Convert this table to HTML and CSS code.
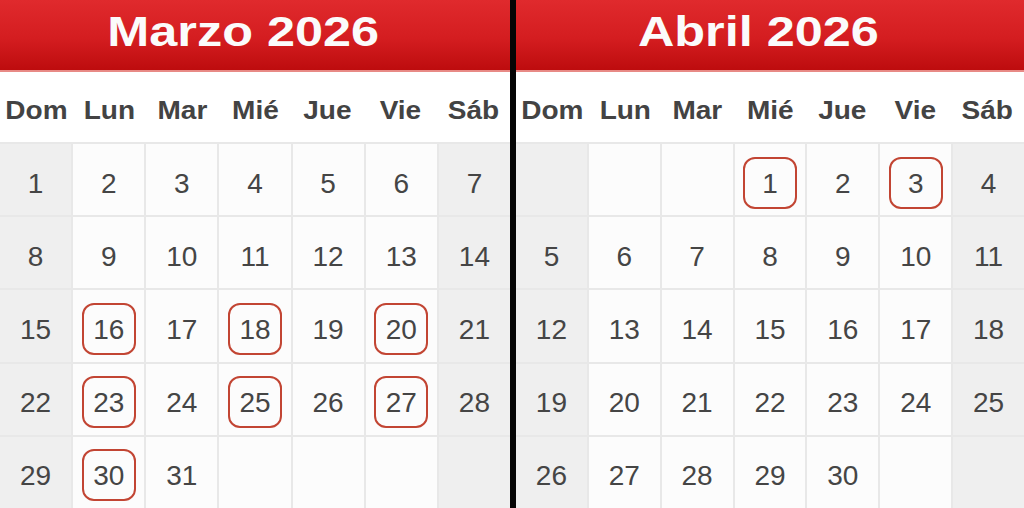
FILE: index.html
```html
<!DOCTYPE html>
<html lang="es">
<head>
<meta charset="utf-8">
<title>Marzo y Abril 2026</title>
<link rel="stylesheet" href="styles.css">
</head>
<body>
<div class="page">
  <section class="cal cal-left">
    <header class="cal-head"><h1 class="title">Marzo 2026</h1></header>
    <div class="weekdays">
      <span>Dom</span><span>Lun</span><span>Mar</span><span>Mié</span><span>Jue</span><span>Vie</span><span>Sáb</span>
    </div>
    <div class="grid">
      <div class="cell we"><span class="n">1</span></div>
      <div class="cell"><span class="n">2</span></div>
      <div class="cell"><span class="n">3</span></div>
      <div class="cell"><span class="n">4</span></div>
      <div class="cell"><span class="n">5</span></div>
      <div class="cell"><span class="n">6</span></div>
      <div class="cell we"><span class="n">7</span></div>

      <div class="cell we"><span class="n">8</span></div>
      <div class="cell"><span class="n">9</span></div>
      <div class="cell"><span class="n">10</span></div>
      <div class="cell"><span class="n">11</span></div>
      <div class="cell"><span class="n">12</span></div>
      <div class="cell"><span class="n">13</span></div>
      <div class="cell we"><span class="n">14</span></div>

      <div class="cell we"><span class="n">15</span></div>
      <div class="cell"><span class="n mark">16</span></div>
      <div class="cell"><span class="n">17</span></div>
      <div class="cell"><span class="n mark">18</span></div>
      <div class="cell"><span class="n">19</span></div>
      <div class="cell"><span class="n mark">20</span></div>
      <div class="cell we"><span class="n">21</span></div>

      <div class="cell we"><span class="n">22</span></div>
      <div class="cell"><span class="n mark">23</span></div>
      <div class="cell"><span class="n">24</span></div>
      <div class="cell"><span class="n mark">25</span></div>
      <div class="cell"><span class="n">26</span></div>
      <div class="cell"><span class="n mark">27</span></div>
      <div class="cell we"><span class="n">28</span></div>

      <div class="cell we"><span class="n">29</span></div>
      <div class="cell"><span class="n mark">30</span></div>
      <div class="cell"><span class="n">31</span></div>
      <div class="cell"></div>
      <div class="cell"></div>
      <div class="cell"></div>
      <div class="cell we"></div>
    </div>
  </section>

  <div class="divider"></div>

  <section class="cal cal-right">
    <header class="cal-head"><h1 class="title">Abril 2026</h1></header>
    <div class="weekdays">
      <span>Dom</span><span>Lun</span><span>Mar</span><span>Mié</span><span>Jue</span><span>Vie</span><span>Sáb</span>
    </div>
    <div class="grid">
      <div class="cell we"></div>
      <div class="cell"></div>
      <div class="cell"></div>
      <div class="cell"><span class="n mark">1</span></div>
      <div class="cell"><span class="n">2</span></div>
      <div class="cell"><span class="n mark">3</span></div>
      <div class="cell we"><span class="n">4</span></div>

      <div class="cell we"><span class="n">5</span></div>
      <div class="cell"><span class="n">6</span></div>
      <div class="cell"><span class="n">7</span></div>
      <div class="cell"><span class="n">8</span></div>
      <div class="cell"><span class="n">9</span></div>
      <div class="cell"><span class="n">10</span></div>
      <div class="cell we"><span class="n">11</span></div>

      <div class="cell we"><span class="n">12</span></div>
      <div class="cell"><span class="n">13</span></div>
      <div class="cell"><span class="n">14</span></div>
      <div class="cell"><span class="n">15</span></div>
      <div class="cell"><span class="n">16</span></div>
      <div class="cell"><span class="n">17</span></div>
      <div class="cell we"><span class="n">18</span></div>

      <div class="cell we"><span class="n">19</span></div>
      <div class="cell"><span class="n">20</span></div>
      <div class="cell"><span class="n">21</span></div>
      <div class="cell"><span class="n">22</span></div>
      <div class="cell"><span class="n">23</span></div>
      <div class="cell"><span class="n">24</span></div>
      <div class="cell we"><span class="n">25</span></div>

      <div class="cell we"><span class="n">26</span></div>
      <div class="cell"><span class="n">27</span></div>
      <div class="cell"><span class="n">28</span></div>
      <div class="cell"><span class="n">29</span></div>
      <div class="cell"><span class="n">30</span></div>
      <div class="cell"></div>
      <div class="cell we"></div>
    </div>
  </section>
</div>
</body>
</html>
```

FILE: styles.css
```css
* { box-sizing: border-box; }

html, body {
  margin: 0;
  padding: 0;
  background: #ffffff;
}

body {
  font-family: "Liberation Sans", Arial, Helvetica, sans-serif;
  color: #454545;
}

.page {
  display: flex;
  width: 1024px;
  height: 508px;
  overflow: hidden;
}

.cal {
  display: flex;
  flex-direction: column;
  height: 508px;
}

.cal-left { width: 510px; }
.cal-right { flex: 1; }

.divider {
  width: 6px;
  background: #050505;
  flex: none;
}

.cal-head {
  height: 72px;
  flex: none;
  background: linear-gradient(#e02a2d 0%, #d41d20 55%, #bd0c0e 100%);
  border-bottom: 2px solid #e88a86;
  display: flex;
  align-items: center;
  justify-content: center;
  padding: 0 24px 6px 0;
}

.title {
  margin: 0;
  font-size: 42px;
  font-weight: 700;
  color: #fbfbfb;
  line-height: 1;
  transform: scaleX(1.2);
  letter-spacing: 0;
}

.weekdays {
  height: 70px;
  flex: none;
  display: grid;
  grid-template-columns: repeat(7, 1fr);
  align-items: center;
  background: #ffffff;
  padding-top: 6px;
}

.weekdays span {
  text-align: center;
  font-size: 25px;
  font-weight: 700;
  color: #434343;
  transform: scaleX(1.12);
}

.grid {
  flex: 1;
  display: grid;
  grid-template-columns: repeat(7, 1fr);
  grid-template-rows: repeat(5, 1fr);
  gap: 2px;
  padding-top: 2px;
  background: #e8e8e8;
}

.cell {
  background: #fcfcfc;
  display: flex;
  align-items: center;
  justify-content: center;
  padding-top: 6px;
}

.cell.we {
  background: #efefef;
}

.n {
  width: 54px;
  height: 52px;
  display: flex;
  align-items: center;
  justify-content: center;
  font-size: 28px;
  color: #454545;
  border: 2.5px solid transparent;
  border-radius: 12px;
  padding-top: 2px;
}

.n.mark {
  border-color: #c24533;
}
```
